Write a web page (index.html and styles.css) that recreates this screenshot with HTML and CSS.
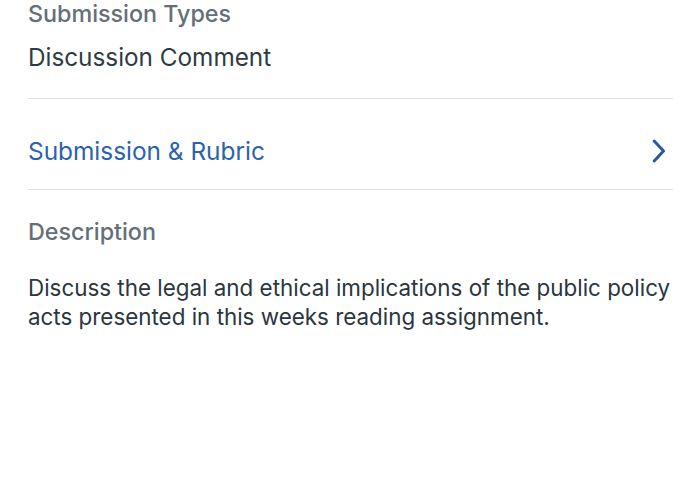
FILE: index.html
```html
<!DOCTYPE html>
<html>
<head>
<meta charset="utf-8">
<link rel="stylesheet" href="styles.css">
</head>
<body>
<div class="page">
  <section class="field">
    <div class="label">Submission Types</div>
    <div class="value">Discussion Comment</div>
  </section>
  <div class="row-link">
    <span class="link-text">Submission &amp; Rubric</span>
    <svg class="chevron" width="14" height="24" viewBox="0 0 14 24"><path d="M2.2 2 L11.5 12 L2.2 22" fill="none" stroke="#2858a2" stroke-width="3" stroke-linecap="round" stroke-linejoin="round"/></svg>
  </div>
  <section class="desc">
    <div class="label">Description</div>
    <p class="body">Discuss the legal and ethical implications of the public policy acts presented in this weeks reading assignment.</p>
  </section>
</div>
</body>
</html>
```

FILE: styles.css
```css
html, body {
  margin: 0;
  padding: 0;
  background: #ffffff;
}
body {
  font-family: Inter, "Noto Sans", sans-serif;
  -webkit-font-smoothing: antialiased;
}
.page {
  margin: 0 27px 0 28px;
}
.field {
  border-bottom: 1px solid #dfe1e3;
  padding-bottom: 26px;
}
.label {
  color: #656f78;
  font-size: 23.3px;
  line-height: 28px;
  font-weight: 500;
}
.value {
  color: #2d3b45;
  font-size: 24.3px;
  line-height: 30px;
  margin-top: 14px;
}
.row-link {
  display: flex;
  align-items: center;
  justify-content: space-between;
  box-sizing: border-box;
  height: 91px;
  padding-top: 14px;
  border-bottom: 1px solid #dfe1e3;
}
.link-text {
  color: #2a63ad;
  font-size: 24.4px;
}
.chevron {
  margin-right: 7px;
}
.desc {
  padding-top: 28px;
}
.body {
  margin: 27px 0 0;
  color: #2a3640;
  font-size: 22.4px;
  line-height: 29px;
}
```
